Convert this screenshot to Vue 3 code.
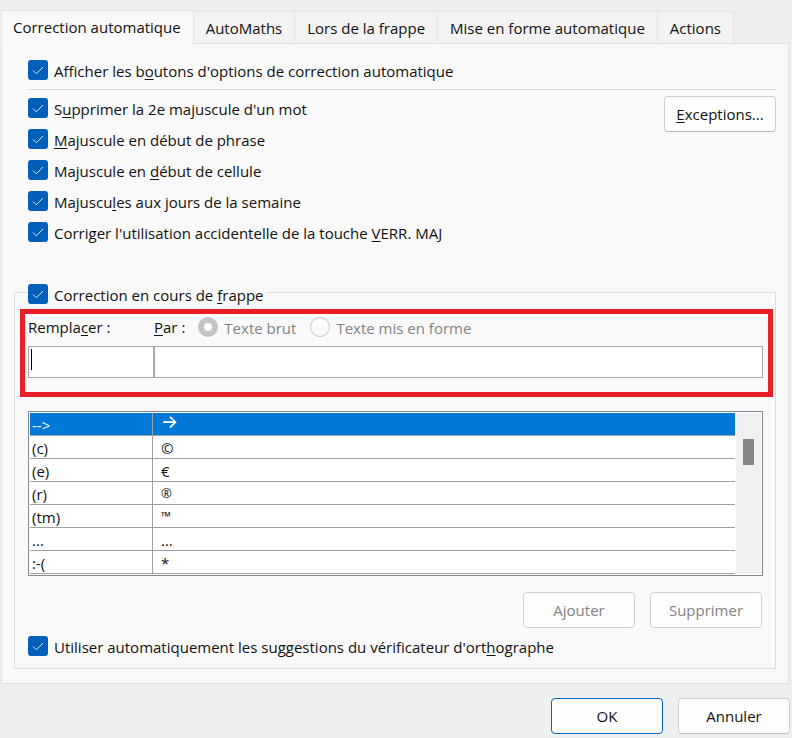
<template>
    <div class="dialog">
        <div class="tabs" role="tablist">
            <button v-for="tab in tabs" :key="tab" type="button" role="tab" class="tab"
                :class="{ active: tab === activeTab }" :aria-selected="tab === activeTab" @click="activeTab = tab">
                {{ tab }}
            </button>
        </div>

        <main class="panel">
            <label class="check first">
                <input v-model="showButtons" type="checkbox">
                <Mnemonic text="Afficher les b&outons d'options de correction automatique" />
            </label>

            <section class="rules">
                <div class="rule-list">
                    <label v-for="rule in rules" :key="rule.text" class="check">
                        <input v-model="rule.checked" type="checkbox">
                        <Mnemonic :text="rule.text" />
                    </label>
                </div>
                <button type="button" class="btn">
                    <Mnemonic text="&Exceptions..." />
                </button>
            </section>

            <fieldset class="group">
                <legend>
                    <label class="check">
                        <input v-model="replaceWhileTyping" type="checkbox">
                        <Mnemonic text="Correction en cours de &frappe" />
                    </label>
                </legend>

                <div class="highlight">
                    <div class="replace-labels">
                        <label for="replace"><Mnemonic text="Rempla&cer :" /></label>
                        <label for="with"><Mnemonic text="&Par :" /></label>
                        <label class="radio">
                            <input type="radio" name="format" checked disabled>
                            <span>Texte brut</span>
                        </label>
                        <label class="radio">
                            <input type="radio" name="format" disabled>
                            <span>Texte mis en forme</span>
                        </label>
                    </div>
                    <div class="replace-fields">
                        <div class="field">
                            <input id="replace" v-model="replaceText" type="text">
                            <span v-if="!replaceText" class="caret"></span>
                        </div>
                        <input id="with" v-model="withText" type="text">
                    </div>
                </div>

                <div class="list">
                    <table>
                        <tbody>
                            <tr v-for="(entry, i) in entries" :key="entry.from" :class="{ selected: i === selected }"
                                @click="selected = i">
                                <td class="from">{{ entry.from }}</td>
                                <td class="to" :class="entry.kind">{{ entry.to }}</td>
                            </tr>
                        </tbody>
                    </table>
                    <div class="scrollbar">
                        <div class="thumb"></div>
                    </div>
                </div>

                <div class="list-actions">
                    <button type="button" class="btn" disabled>Ajouter</button>
                    <button type="button" class="btn" disabled>Supprimer</button>
                </div>

                <label class="check suggestions">
                    <input v-model="useSuggestions" type="checkbox">
                    <Mnemonic text="Utiliser automatiquement les suggestions du vérificateur d'ort&hographe" />
                </label>
            </fieldset>
        </main>

        <footer class="footer">
            <button type="button" class="btn default">OK</button>
            <button type="button" class="btn">Annuler</button>
        </footer>
    </div>
</template>

<script setup>
import { h, ref } from 'vue'

// The letter after "&" is the keyboard shortcut and gets underlined
const Mnemonic = ({ text }) => {
    const at = text.indexOf('&')
    return h('span', { class: 'mnemonic' }, [text.slice(0, at), h('u', text[at + 1]), text.slice(at + 2)])
}
Mnemonic.props = ['text']

const tabs = ['Correction automatique', 'AutoMaths', 'Lors de la frappe', 'Mise en forme automatique', 'Actions']
const activeTab = ref(tabs[0])

const showButtons = ref(true)
const replaceWhileTyping = ref(true)
const useSuggestions = ref(true)
const replaceText = ref('')
const withText = ref('')

const rules = ref([
    { text: "S&upprimer la 2e majuscule d'un mot", checked: true },
    { text: '&Majuscule en début de phrase', checked: true },
    { text: 'Majuscule en &début de cellule', checked: true },
    { text: 'Majuscu&les aux jours de la semaine', checked: true },
    { text: "Corriger l'utilisation accidentelle de la touche &VERR. MAJ", checked: true },
])

const selected = ref(0)
const entries = [
    { from: '-->', to: '→', kind: 'arrow' },
    { from: '(c)', to: '©' },
    { from: '(e)', to: '€' },
    { from: '(r)', to: '®', kind: 'small' },
    { from: '(tm)', to: '™', kind: 'small' },
    { from: '...', to: '…' },
    { from: ':-(', to: '*' },
]
</script>

<style>
body {
    margin: 0;
    background: #efefef;
}

.mnemonic u {
    text-decoration-thickness: 1px;
    text-underline-offset: 2px;
}
</style>

<style scoped>
.dialog {
    padding: 10px 2px 4px 1px;
    font-family: "Open Sans", "Noto Sans", sans-serif;
    font-size: 15px;
    line-height: 20px;
    color: #111;
}

.dialog * {
    box-sizing: border-box;
}

button,
input {
    font: inherit;
    color: inherit;
}

.tabs {
    display: flex;
    align-items: flex-end;
}

.tab {
    height: 32px;
    margin: 0;
    padding: 0 12px;
    border: 1px solid #e4e4e4;
    border-width: 1px 1px 0 0;
    background: #f3f3f3;
    white-space: nowrap;
}

.tab.active {
    position: relative;
    height: 34px;
    margin-bottom: -1px;
    padding: 0 12px 2px 11px;
    border-left-width: 1px;
    background: #f9f9f9;
}

.panel {
    margin-right: 1px;
    padding: 16px 12px 14px;
    border: 1px solid #e0e0e0;
    background: #f9f9f9;
}

.check {
    display: flex;
    align-items: center;
    gap: 6px;
    height: 20px;
    white-space: nowrap;
}

.check .mnemonic {
    padding-top: 1px;
}

.check input {
    flex: none;
    width: 20px;
    height: 20px;
    margin: 0;
    appearance: none;
    border: 1px solid #868686;
    border-radius: 3px;
    background: #fff;
}

.check input:checked {
    border: 0;
    background: #005fb8 url("data:image/svg+xml,%3Csvg xmlns='http://www.w3.org/2000/svg' viewBox='0 0 20 20'%3E%3Cpath d='M5 10.5l3.3 3.3L15 7' fill='none' stroke='%23d8ecff' stroke-width='1'/%3E%3C/svg%3E") center / 20px 20px;
}

.check.first {
    margin-left: 14px;
}

.rules {
    display: flex;
    justify-content: space-between;
    align-items: flex-start;
    margin: 9px 0 38px 14px;
    padding: 6px 0 0;
    border-top: 1px solid #d8d8d8;
}

.rule-list {
    display: flex;
    flex-direction: column;
    gap: 11px;
    padding-top: 2px;
}

.btn {
    width: 112px;
    height: 36px;
    padding: 0;
    border: 1px solid #d0d0d0;
    border-bottom-color: #bababa;
    border-radius: 4px;
    background: #fdfdfd;
}

.btn:disabled {
    border-color: #d0d0d0;
    color: #838383;
}

.btn.default {
    border-color: #0067c0;
}

.group {
    min-width: 0;
    margin: 0;
    padding: 0;
    border: 1px solid #dcdcdc;
}

legend {
    margin-left: 13px;
    padding: 4px 4px 0 0;
}

.highlight {
    margin: 5px 2px 0 5px;
    padding: 3px 5px 14px 3px;
    border: 5px solid #e81f27;
}

.replace-labels {
    display: flex;
    align-items: center;
    height: 20px;
    margin-bottom: 9px;
    line-height: 18px;
    white-space: nowrap;
}

.replace-labels > label:first-child {
    width: 126px;
}

.radio {
    display: flex;
    align-items: center;
    gap: 6px;
    margin-left: 13px;
    color: #838383;
}

.radio + .radio {
    margin-left: 14px;
}

.radio input {
    width: 20px;
    height: 20px;
    margin: 0;
    appearance: none;
    border: 1px solid #c4c4c4;
    border-radius: 50%;
    background: #fbfbfb;
}

.radio input:checked {
    border-width: 6px;
    background: #fff;
}

.radio span {
    padding-top: 1px;
}

.replace-fields {
    display: flex;
}

.field {
    position: relative;
    width: 126px;
}

.replace-fields input {
    width: 100%;
    height: 32px;
    padding: 0 3px;
    border: 1px solid #a8a8a8;
    border-radius: 0;
    outline: none;
    background: #fff;
}

.replace-fields > input {
    flex: 1;
    min-width: 0;
    width: auto;
}

.caret {
    position: absolute;
    top: 3px;
    left: 3px;
    width: 1px;
    height: 21px;
    background: #000;
}

.list {
    display: flex;
    margin: 14px 12px 0 13px;
    padding: 1px;
    border: 1px solid #828790;
    background: #fff;
}

table {
    flex: 1;
    border-collapse: separate;
    border-spacing: 0;
    table-layout: fixed;
    width: 100%;
}

td {
    height: 23px;
    padding: 2px 0 0 2px;
    border-bottom: 1px solid #a0a0a0;
    line-height: 20px;
    white-space: nowrap;
}

.from {
    width: 123px;
    border-right: 1px solid #a0a0a0;
}

.to {
    padding-left: 8px;
}

.small {
    padding-bottom: 2px;
    font-size: 13px;
    line-height: 18px;
}

.arrow {
    padding: 0 0 4px 8px;
    font-family: Inter, sans-serif;
    font-size: 18px;
    font-weight: 500;
    line-height: 18px;
}

.selected td {
    background: #0078d7;
    color: #fff;
}

.scrollbar {
    width: 25px;
    margin-left: 1px;
    padding: 26px 7px 0;
    background: #f0f0f0;
}

.thumb {
    width: 11px;
    height: 26px;
    background: #858585;
}

.list-actions {
    display: flex;
    justify-content: flex-end;
    gap: 15px;
    margin: 16px 13px 8px;
}

.suggestions {
    margin: 0 13px 12px;
}

.footer {
    display: flex;
    justify-content: flex-end;
    gap: 15px;
    padding-top: 14px;
}
</style>
